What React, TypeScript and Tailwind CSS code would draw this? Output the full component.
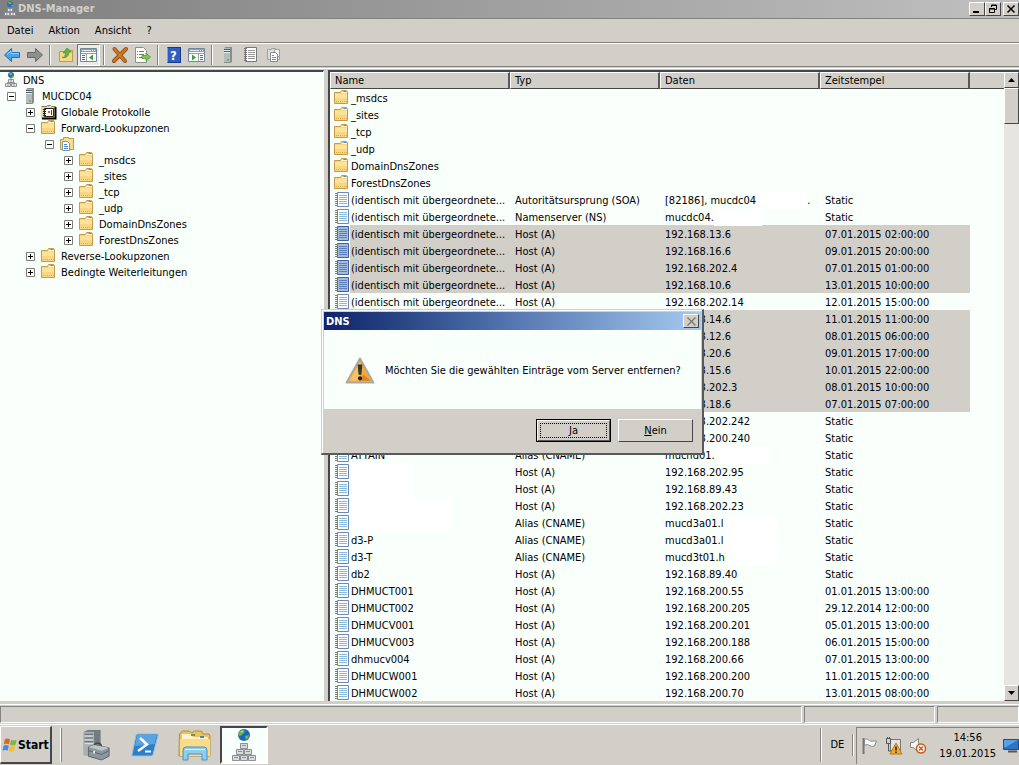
import { ReactNode } from "react";
import clsx from "clsx";

type Kind = "folder" | "record";

type RecordRow = {
  kind: Kind;
  name: string;
  type?: string;
  data?: string;
  tail?: string;
  stamp?: string;
  selected?: boolean;
  nameMask?: string;
  dataMask?: string;
};

const SAME = "(identisch mit übergeordnete...";

const host = (name: string, data: string, stamp: string, selected = false): RecordRow => ({
  kind: "record",
  name,
  type: "Host (A)",
  data,
  stamp,
  selected,
});

const alias = (name: string, data: string): RecordRow => ({
  kind: "record",
  name,
  type: "Alias (CNAME)",
  data,
  stamp: "Static",
  dataMask: "w-[54px]",
});

const rows: RecordRow[] = [
  { kind: "folder", name: "_msdcs" },
  { kind: "folder", name: "_sites" },
  { kind: "folder", name: "_tcp" },
  { kind: "folder", name: "_udp" },
  { kind: "folder", name: "DomainDnsZones" },
  { kind: "folder", name: "ForestDnsZones" },
  {
    kind: "record",
    name: SAME,
    type: "Autoritätsursprung (SOA)",
    data: "[82186], mucdc04",
    dataMask: "w-[51px]",
    tail: ".",
    stamp: "Static",
  },
  {
    kind: "record",
    name: SAME,
    type: "Namenserver (NS)",
    data: "mucdc04.",
    dataMask: "w-[48px]",
    stamp: "Static",
  },
  host(SAME, "192.168.13.6", "07.01.2015 02:00:00", true),
  host(SAME, "192.168.16.6", "09.01.2015 20:00:00", true),
  host(SAME, "192.168.202.4", "07.01.2015 01:00:00", true),
  host(SAME, "192.168.10.6", "13.01.2015 10:00:00", true),
  host(SAME, "192.168.202.14", "12.01.2015 15:00:00"),
  host(SAME, "192.168.14.6", "11.01.2015 11:00:00", true),
  host(SAME, "192.168.12.6", "08.01.2015 06:00:00", true),
  host(SAME, "192.168.20.6", "09.01.2015 17:00:00", true),
  host(SAME, "192.168.15.6", "10.01.2015 22:00:00", true),
  host(SAME, "192.168.202.3", "08.01.2015 10:00:00", true),
  host(SAME, "192.168.18.6", "07.01.2015 07:00:00", true),
  host(SAME, "192.168.202.242", "Static"),
  host(SAME, "192.168.200.240", "Static"),
  alias("ATTAIN", "mucnd01."),
  { ...host("", "192.168.202.95", "Static"), nameMask: "w-[62px]" },
  { ...host("", "192.168.89.43", "Static"), nameMask: "w-[62px]" },
  { ...host("", "192.168.202.23", "Static"), nameMask: "w-[101px]" },
  { ...alias("", "mucd3a01.l"), nameMask: "w-[101px]" },
  alias("d3-P", "mucd3a01.l"),
  alias("d3-T", "mucd3t01.h"),
  host("db2", "192.168.89.40", "Static"),
  host("DHMUCT001", "192.168.200.55", "01.01.2015 13:00:00"),
  host("DHMUCT002", "192.168.200.205", "29.12.2014 12:00:00"),
  host("DHMUCV001", "192.168.200.201", "05.01.2015 13:00:00"),
  host("DHMUCV003", "192.168.200.188", "06.01.2015 15:00:00"),
  host("dhmucv004", "192.168.200.66", "07.01.2015 13:00:00"),
  host("DHMUCW001", "192.168.200.200", "11.01.2015 12:00:00"),
  host("DHMUCW002", "192.168.200.70", "13.01.2015 08:00:00"),
];

/* ---------- icons ---------- */

function FolderIcon() {
  return (
    <svg width="16" height="16" viewBox="0 0 16 16" className="shrink-0">
      <path d="M.5 2.500h6l1-2h5l1 1v12H.5z" fill="#f9d782" stroke="#c49c48" />
      <path d="M1 4h12v4H1z" fill="#fbe39c" />
      <path d="M7.500 2.500h5.500" stroke="#fff6d2" />
      <path d="M9.500 1.500h3" stroke="#4a90d8" />
      <path d="M2 11.500h11" stroke="#e0ab48" strokeDasharray="1 1" />
    </svg>
  );
}

function RecordIcon({ selected = false }: { selected?: boolean }) {
  return (
    <svg width="16" height="16" viewBox="0 0 16 16" className="shrink-0">
      <path d="M3.500.5h11v14h-11z" fill={selected ? "#a5bbdc" : "#fff"} stroke={selected ? "#3f60a2" : "#6c87bb"} />
      <path d="M5 3.500h8M5 5.500h8M5 7.500h8M5 9.500h8M5 11.500h8" stroke={selected ? "#5b82bd" : "#86b9dc"} />
      <path d="M1 1.500h3M1 3.500h3M1 5.500h3M1 7.500h3M1 9.500h3M1 11.500h3M1 13.500h3" stroke="#76806f" />
    </svg>
  );
}

function DnsIcon() {
  return (
    <svg width="16" height="16" viewBox="0 0 16 16" className="shrink-0">
      <circle cx="8" cy="3" r="3" fill="#2872bd" />
      <path d="M6 1h3v2H7zM9 4h2v1H9z" fill="#6bbb4b" />
      <path d="M8 6v2M5 10v2M11 10v2" stroke="#777" />
      <path d="M5.500 7.500h5v3h-5zM2.500 11.500h5v3h-5zM8.500 11.500h5v3h-5z" fill="#e9edf0" stroke="#8a8f96" />
      <path d="M7 9h2M4 13h2M10 13h2" stroke="#8a8f96" />
    </svg>
  );
}

function ServerIcon() {
  return (
    <svg width="16" height="16" viewBox="0 0 16 16" className="shrink-0">
      <path d="M4 1l2-1h6v15l-2 1H4z" fill="#878d90" />
      <path d="M4 1h6v14H4z" fill="#b4bcbf" />
      <path d="M4 2.500h6M4 4.500h6" stroke="#50595f" />
      <path d="M4 3.500h6M4 5.500h6" stroke="#e7eef0" />
      <path d="M7 12h2v2H7z" fill="#77b255" />
    </svg>
  );
}

function LogBookIcon() {
  return (
    <svg width="16" height="16" viewBox="0 0 16 16" className="shrink-0">
      <path d="M0 2h5l1-1h3v2h5v12H0z" fill="#e9d6a0" />
      <path d="M.5 2.500h5l1-1h3l1 1h4" fill="none" stroke="#8c7848" />
      <path d="M14.500 3v11.500H1" fill="none" stroke="#000" strokeWidth="2" />
      <path d="M3.500 4.500h9v8h-9z" fill="#fff" stroke="#222" />
      <path d="M2 5.500h3M2 7.500h3M2 9.500h3M2 11.500h3" stroke="#222" />
      <path d="M7 7h2v2H7z" fill="#d8682b" />
      <path d="M10.500 6v5" stroke="#444" />
    </svg>
  );
}

function ZoneIcon() {
  return (
    <svg width="16" height="16" viewBox="0 0 16 16" className="shrink-0">
      <path d="M.5 3.500h3v-2h5v1h5v11H.5z" fill="#f8dc8f" stroke="#c09a48" />
      <path d="M2.500 5.500h5l2 2v7h-7z" fill="#fff" stroke="#7d95ab" />
      <path d="M4 8.500h3M4 10.500h4M4 12.500h4" stroke="#4b86c6" />
    </svg>
  );
}

function ArrowIcon({ forward = false }: { forward?: boolean }) {
  return (
    <svg width="18" height="18" viewBox="0 0 18 18">
      {forward ? (
        <path d="M1.500 6.500h8v-4l7 6.500-7 6.500v-4h-8z" fill="#8f8f8d" stroke="#666664" />
      ) : (
        <>
          <path d="M16.500 6.500h-8v-4l-7 6.500 7 6.500v-4h8z" fill="#48a4e8" stroke="#1c6fc0" />
          <path d="M4 8.500l4-3.500v2.500h8" fill="none" stroke="#9ad6fa" />
        </>
      )}
    </svg>
  );
}

function UpFolderIcon() {
  return (
    <svg width="16" height="16" viewBox="0 0 16 16">
      <path d="M1.500 4.500h7l1-1h5v11h-13z" fill="#f8d983" stroke="#c09a48" />
      <path d="M4 10.500c2 0 3.500-2 3.500-4.500H5l4-5 4.500 4H11c0 4-3 6.500-7 5.500z" fill="#62b544" stroke="#3d8a2a" strokeWidth=".6" />
    </svg>
  );
}

function PaneIcon({ right = false }: { right?: boolean }) {
  return (
    <svg width="17" height="16" viewBox="0 0 17 16">
      <path d="M.5 1.500h16v13H.5z" fill="#fff" stroke="#73879c" />
      <path d="M1 2h15v3H1z" fill="#8fa0b4" />
      <path d="M2 3.500h9" stroke="#dce6f0" />
      <path d="M12 3.500h1M14 3.500h1" stroke="#fff" />
      <path d={right ? "M1 6.500h15M10.500 7v7" : "M1 6.500h15M6.500 7v7"} stroke="#8fa0b4" />
      {right ? (
        <>
          <path d="M4 7.500l4 3-4 3z" fill="#3f9e3b" />
          <path d="M12 8.500h3M12 10.500h3M12 12.500h3" stroke="#2f77c4" />
        </>
      ) : (
        <>
          <path d="M13 7.500l-4 3 4 3z" fill="#3f9e3b" />
          <path d="M2 8.500h3M2 10.500h3M2 12.500h3" stroke="#2f77c4" />
        </>
      )}
    </svg>
  );
}

function DeleteIcon() {
  return (
    <svg width="18" height="18" viewBox="0 0 18 18">
      <path d="M3.500 3L14 15M15 3L3 15" stroke="#8c4a0e" strokeWidth="4" strokeLinecap="round" />
      <path d="M3.500 3L14 15M15 3L3 15" stroke="#cf7a20" strokeWidth="2.400" strokeLinecap="round" />
    </svg>
  );
}

function ExportIcon() {
  return (
    <svg width="17" height="16" viewBox="0 0 17 16">
      <path d="M1.500.5h8l3 3v12h-11z" fill="#fffef2" stroke="#8d9289" />
      <path d="M3 4.500h1M3 7.500h1M3 10.500h1M5 4.500h5M5 7.500h5M5 10.500h3" stroke="#6d7a80" />
      <path d="M8 8.500h4v-2.500l4.500 4-4.500 4v-2.500H8z" fill="#7cc653" stroke="#4c9434" strokeWidth=".7" />
    </svg>
  );
}

function HelpIcon() {
  return (
    <span className="flex h-4 w-[14px] items-center justify-center border border-[#163a8c] border-l-[#7ba4e6] bg-[#2c5fc4] text-[13px] leading-none font-bold text-white">
      ?
    </span>
  );
}

function NotebookIcon() {
  return (
    <svg width="16" height="16" viewBox="0 0 16 16">
      <path d="M2.500.5h11v14h-11z" fill="#fff" stroke="#777" />
      <path d="M5 3.500h7M5 5.500h7M5 7.500h7M5 9.500h7M5 11.500h7" stroke="#999" />
      <path d="M1 1.500h3M1 3.500h3M1 5.500h3M1 7.500h3M1 9.500h3M1 11.500h3M1 13.500h3" stroke="#777" />
    </svg>
  );
}

function CopiesIcon() {
  return (
    <svg width="16" height="16" viewBox="0 0 16 16">
      <path d="M1.500 2.500h4v-1h4v1h4v10h-12z" fill="#dededa" stroke="#a0a09c" />
      <path d="M8.500 2.500h5v7h-5z" fill="#f4f4f0" stroke="#a0a09c" />
      <path d="M4.500 5.500h5l2 2v7h-7z" fill="#fff" stroke="#888" />
      <path d="M6 8.500h2M6 10.500h4M6 12.500h4" stroke="#888" />
    </svg>
  );
}

function WarningIcon() {
  return (
    <svg width="30" height="28" viewBox="0 0 32 30" className="shrink-0">
      <path d="M16 1.500L30.500 27.500h-29z" fill="#f4a93c" stroke="#a7a7a4" strokeWidth="2" strokeLinejoin="round" />
      <path d="M16 5L4.500 25.500h11.500z" fill="#fac063" />
      <path d="M20 19l7.500 6.500H14z" fill="#d98521" />
      <path d="M13.500 8h5l-1 11h-3z" fill="#2c3a30" />
      <circle cx="16" cy="22.800" r="2.200" fill="#1b1b1b" />
    </svg>
  );
}

function WindowsLogo() {
  return (
    <svg width="16" height="16" viewBox="0 0 17 16" className="shrink-0">
      <path d="M3 2c2-1.500 4-1 5.500 0L7.500 7.500C6 6.500 4 6.500 2 7.500z" fill="#e2632d" />
      <path d="M9.500 2.500c2 1 4 1 6 0l-1.200 5.500c-2 1-4 .8-5.800-.2z" fill="#7fb83f" />
      <path d="M1.700 8.700c2-1 4-.9 5.500 0L6 14c-1.500-1-3.500-1-5.500 0z" fill="#4a8ad6" />
      <path d="M8.200 9c2 1 4 1 5.800.2l-1.200 5.300c-2 1-4 .8-5.800-.2z" fill="#f4bd35" />
    </svg>
  );
}

function ServerManagerIcon() {
  return (
    <svg width="30" height="32" viewBox="0 0 32 32">
      <path d="M4 2l4-2h14v24l-4 3H4z" fill="#737b80" />
      <path d="M4 2h11v25H4z" fill="#a9b1b5" />
      <path d="M5 4.500h9M5 8.500h9M5 12.500h9" stroke="#565f65" />
      <path d="M5 6.500h9M5 10.500h9M5 14.500h9" stroke="#e0e6e8" />
      <path d="M15 17c0-4 8-4 8 1" fill="none" stroke="#3f474c" strokeWidth="1.500" />
      <path d="M9 18l6-2 16 3v9l-8 4-14-4z" fill="#8b969d" stroke="#59636a" />
      <path d="M9 18l6-2 16 3-8 3z" fill="#bcc5ca" />
      <path d="M9 22l14 4 8-4" fill="none" stroke="#59636a" />
      <path d="M14 22h2v3h-2z" fill="#e4e8ea" />
    </svg>
  );
}

function PowerShellIcon() {
  return (
    <svg width="28" height="24" viewBox="0 0 28 24">
      <path d="M6 1h20q1.500 0 1 1.500l-5 19q-.4 1.500-2 1.500H2q-1.500 0-1-1.500l4-19Q5.400 1 6 1z" fill="#2e7fc8" stroke="#8fc2ea" />
      <path d="M6 2h20l-2.500 9L4 13z" fill="#5ba3df" />
      <path d="M9 5l7 6.500L7 18" fill="none" stroke="#fff" strokeWidth="2.500" />
      <path d="M14 18.500h6" stroke="#fff" strokeWidth="2" />
    </svg>
  );
}

function ExplorerIcon() {
  return (
    <svg width="34" height="32" viewBox="0 0 34 32">
      <path d="M1.500 5l3-3h7l2 2 3-2h7l1.500 3h6l1 2v20h-31z" fill="#eec15c" stroke="#b88b37" />
      <path d="M4 5h9l2 3h15v3H4z" fill="#fff3cf" />
      <path d="M13 5h4v2h-4z" fill="#5e9e3e" />
      <path d="M22 7h4v2h-4z" fill="#3d84cf" />
      <path d="M2 10h30v17H2z" fill="#f9dd86" />
      <path d="M5 31V21q0-3 3-3h18q3 0 3 3v10h-5v-6H10v6z" fill="#8fcdf0" stroke="#4690c4" />
      <path d="M7 20.500h20" stroke="#d9f2fd" />
    </svg>
  );
}

function DnsTaskIcon() {
  const boxes = [[12, 15], [8, 21], [16, 21], [4, 27], [12, 27], [20, 27]];
  return (
    <svg width="32" height="33" viewBox="0 0 32 33">
      <circle cx="16" cy="6" r="6" fill="#1e66b6" />
      <path d="M12 2q4-2 5 0l-2 3-3 2-2-1zM17 7l4-1q0 3-3 5z" fill="#6fb84c" />
      <path d="M13 3l2-1" stroke="#bfe4ff" />
      {boxes.map(([x, y]) => (
        <g key={`${x}-${y}`}>
          <path d={`M${x + 0.5} ${y - 0.5}h7v5h-7z`} fill="#d8dcde" stroke="#8a8f93" />
          <path d={`M${x + 2} ${y + 1.5}h4`} stroke="#8a8f93" />
        </g>
      ))}
    </svg>
  );
}

function FlagIcon() {
  return (
    <svg width="18" height="18" viewBox="0 0 18 18">
      <path d="M2.500 1v16" stroke="#777" strokeWidth="2" />
      <path d="M3.500 2.500c3-1.500 4 1 6 1.500s4-.5 6 0l-2 5c-3 1-4 0-6-1s-3 0-4 .5z" fill="#fafafa" stroke="#888" />
    </svg>
  );
}

function NetworkIcon() {
  return (
    <svg width="18" height="18" viewBox="0 0 18 18">
      <path d="M5.500 2.500h10v11h-10z" fill="#e4e3de" stroke="#777" />
      <path d="M1.500 1.500h4v5h-4zM2.500 0v2M4.500 0v2M3.500 6v8h3" fill="none" stroke="#555" />
      <path d="M11 6l6 11H5z" fill="#f6a829" stroke="#b87916" />
      <path d="M11 9.500v4M11 14.500v1.500" stroke="#222" strokeWidth="1.500" />
    </svg>
  );
}

function VolumeIcon() {
  return (
    <svg width="18" height="18" viewBox="0 0 18 18">
      <path d="M1.500 5.500h3l5-4v14l-5-5h-3z" fill="#f5f5f5" stroke="#888" />
      <circle cx="12" cy="11.500" r="4.500" fill="#fff" stroke="#c85a1c" strokeWidth="1.500" />
      <path d="M10 9.500l4 4M14 9.500l-4 4" stroke="#c85a1c" strokeWidth="1.500" />
    </svg>
  );
}

function DesktopIcon() {
  return (
    <svg width="16" height="14" viewBox="0 0 16 14">
      <path d="M.5.5h15v10H.5z" fill="#2c74c4" stroke="#1c4b86" />
      <path d="M1 1h14L3 8H1z" fill="#5aa0e4" />
      <path d="M5 12.500h9" stroke="#555" strokeWidth="2" />
    </svg>
  );
}

/* ---------- small parts ---------- */

const RAISED = "border border-t-white border-l-white border-r-[#45454a] border-b-[#45454a] bg-[#d1cfc8]";

function Separator() {
  return <div className="mx-[3px] h-5 w-[2px] border-l border-l-[#85837e] border-r border-r-white" />;
}

function ToolButton({ label, pressed, children }: { label: string; pressed?: boolean; children: ReactNode }) {
  return (
    <button
      type="button"
      aria-label={label}
      className={clsx(
        "flex h-[22px] w-[23px] items-center justify-center border",
        pressed ? "border-t-[#77756f] border-l-[#77756f] border-r-white border-b-white bg-[#ecebe6]" : "border-transparent",
      )}
    >
      {children}
    </button>
  );
}

function CaptionButton({ label, children }: { label: string; children: ReactNode }) {
  return (
    <button type="button" aria-label={label} className={clsx("flex h-[14px] w-4 items-center justify-center", RAISED)}>
      <svg width="12" height="10" viewBox="0 0 12 10" fill="none" stroke="#000">
        {children}
      </svg>
    </button>
  );
}

function Expander({ open }: { open: boolean }) {
  return (
    <button type="button" aria-label={open ? "Reduzieren" : "Erweitern"} className="shrink-0">
      <svg width="9" height="9" viewBox="0 0 9 9">
        <path d="M.5.5h8v8h-8z" fill="#fff" stroke="#7c7c7c" />
        <path d={open ? "M2 4.500h5" : "M2 4.500h5M4.500 2v5"} stroke="#000" />
      </svg>
    </button>
  );
}

type TreeItem = { indent: string; open?: boolean; icon: ReactNode; label: string };

const tree: TreeItem[] = [
  { indent: "pl-[3px]", icon: <DnsIcon />, label: "DNS" },
  { indent: "pl-[7px]", open: true, icon: <ServerIcon />, label: "MUCDC04" },
  { indent: "pl-[26px]", open: false, icon: <LogBookIcon />, label: "Globale Protokolle" },
  { indent: "pl-[26px]", open: true, icon: <FolderIcon />, label: "Forward-Lookupzonen" },
  { indent: "pl-[45px]", open: true, icon: <ZoneIcon />, label: "" },
  { indent: "pl-16", open: false, icon: <FolderIcon />, label: "_msdcs" },
  { indent: "pl-16", open: false, icon: <FolderIcon />, label: "_sites" },
  { indent: "pl-16", open: false, icon: <FolderIcon />, label: "_tcp" },
  { indent: "pl-16", open: false, icon: <FolderIcon />, label: "_udp" },
  { indent: "pl-16", open: false, icon: <FolderIcon />, label: "DomainDnsZones" },
  { indent: "pl-16", open: false, icon: <FolderIcon />, label: "ForestDnsZones" },
  { indent: "pl-[26px]", open: false, icon: <FolderIcon />, label: "Reverse-Lookupzonen" },
  { indent: "pl-[26px]", open: false, icon: <FolderIcon />, label: "Bedingte Weiterleitungen" },
];

function ConsoleTree() {
  return (
    <nav className="w-[324px] shrink-0 border-t-2 border-t-[#45454a] border-r border-r-white bg-[#f9fffa]" aria-label="Konsolenstruktur">
      <ul>
        {tree.map((item, i) => (
          <li key={i} className={clsx("flex h-4 items-center", item.indent)}>
            {item.open !== undefined && (
              <span className="mr-[6px] flex">
                <Expander open={item.open} />
              </span>
            )}
            {item.icon}
            {item.label ? (
              <span className="ml-1 pt-[2px] whitespace-nowrap">{item.label}</span>
            ) : (
              <span className="ml-1 h-4 w-[62px] bg-white" />
            )}
          </li>
        ))}
      </ul>
    </nav>
  );
}

function RecordTable() {
  const head =
    "h-[17px] border-t border-l border-t-white border-l-white border-r-2 border-r-[#5a595a] border-b border-b-[#45454a] bg-[#d1cfc8] p-0 pl-1 text-left font-normal";
  return (
    <table className="min-w-0 flex-1 table-fixed border-separate border-spacing-0 bg-[#f9fffa]">
      <colgroup>
        <col className="w-[180px]" />
        <col className="w-[150px]" />
        <col className="w-[160px]" />
        <col className="w-[150px]" />
        <col />
      </colgroup>
      <thead>
        <tr>
          <th className={head}>Name</th>
          <th className={head}>Typ</th>
          <th className={head}>Daten</th>
          <th className={head}>Zeitstempel</th>
          <th className="border-t border-b border-t-white border-b-[#45454a] bg-[#d1cfc8] p-0" />
        </tr>
      </thead>
      <tbody>
        {rows.map((row, i) => {
          const cell = clsx("h-[17px] p-0 pt-[2px] pl-[5px]", row.selected && "bg-[#d1cfc8]");
          return (
            <tr key={i}>
              <td className="h-[17px] p-0 pl-1">
                <div className="flex h-[17px] items-center">
                  {row.kind === "folder" ? <FolderIcon /> : <RecordIcon selected={row.selected} />}
                  <span
                    className={clsx(
                      "flex h-[17px] flex-1 items-center pl-px whitespace-nowrap",
                      !row.nameMask && "pt-[2px]",
                      row.selected && "bg-[#d1cfc8]",
                    )}
                  >
                    {row.name}
                    {row.nameMask && <span className={clsx("h-[17px] bg-white", row.nameMask)} />}
                  </span>
                </div>
              </td>
              <td className={cell}>{row.type}</td>
              <td className={cell}>
                <div className="flex h-[15px] items-center whitespace-nowrap">
                  {row.data}
                  {row.dataMask && <span className={clsx("h-[17px] bg-white", row.dataMask)} />}
                  {row.tail}
                </div>
              </td>
              <td className={cell}>{row.stamp}</td>
              <td />
            </tr>
          );
        })}
      </tbody>
    </table>
  );
}

function ScrollBar() {
  const button = clsx("flex h-4 w-full shrink-0 items-center justify-center", RAISED);
  return (
    <div className="flex w-[15px] shrink-0 flex-col bg-[#e6e5df]">
      <button type="button" aria-label="Nach oben" className={button}>
        <svg width="7" height="4" viewBox="0 0 7 4">
          <path d="M3.500 0L7 4H0z" />
        </svg>
      </button>
      <div className={clsx("h-9 shrink-0", RAISED)} />
      <div className="flex-1" />
      <button type="button" aria-label="Nach unten" className={button}>
        <svg width="7" height="4" viewBox="0 0 7 4">
          <path d="M0 0h7L3.500 4z" />
        </svg>
      </button>
    </div>
  );
}

function ConfirmDialog() {
  return (
    <div
      role="dialog"
      aria-label="DNS"
      className="absolute top-[309px] left-[321px] w-[383px] border border-t-[#d1cfc8] border-l-[#d1cfc8] border-r-2 border-b-2 border-r-[#5a595a] border-b-[#5a595a] bg-[#d1cfc8]"
    >
      <div className="border-t border-l border-white p-px">
        <div className="flex h-[18px] items-center justify-between bg-linear-to-r from-[#0f246a] via-[#5576b0] to-[#a6caf0] pr-[2px] pl-[2px] text-white">
          <span className="pt-px font-bold">DNS</span>
          <button type="button" aria-label="Schließen" className={clsx("flex h-[14px] w-4 items-center justify-center", RAISED)}>
            <svg width="9" height="9" viewBox="0 0 9 9" stroke="#77756f" strokeWidth="1.200">
              <path d="M.5.5l8 8M8.500.5l-8 8" />
            </svg>
          </button>
        </div>
        <div className="flex h-[79px] items-center bg-[#f9fffa] pt-[2px] pl-[21px]">
          <WarningIcon />
          <p className="ml-[10px] whitespace-nowrap">Möchten Sie die gewählten Einträge vom Server entfernen?</p>
        </div>
        <div className="flex h-[43px] items-center justify-end gap-[7px] pr-2">
          <button type="button" className="h-[23px] w-[75px] border border-black p-0">
            <span className="flex h-full items-center justify-center border border-t-white border-l-white border-r-[#5a595a] border-b-[#5a595a] p-[2px]">
              <span className="flex h-full w-full items-center justify-center border border-dotted border-black">
                <span>
                  <u>J</u>a
                </span>
              </span>
            </span>
          </button>
          <button type="button" className={clsx("h-[23px] w-[75px]", RAISED)}>
            <u>N</u>ein
          </button>
        </div>
      </div>
    </div>
  );
}

function Taskbar() {
  return (
    <footer className="flex h-[41px] items-center border-t border-t-white">
      <button type="button" className={clsx("flex h-[38px] w-[52px] shrink-0 items-center border-r-2 border-b-2 pl-px text-[12px] font-bold", RAISED)}>
        <WindowsLogo />
        Start
      </button>
      <div className="ml-2 h-[34px] w-[2px] border-l border-l-white border-r border-r-[#85837e]" />
      <div className="ml-2 flex items-center">
        <button type="button" aria-label="Server-Manager" className="flex h-[38px] w-[50px] items-center justify-center">
          <ServerManagerIcon />
        </button>
        <button type="button" aria-label="Windows PowerShell" className="flex h-[38px] w-[50px] items-center justify-center">
          <PowerShellIcon />
        </button>
        <button type="button" aria-label="Windows-Explorer" className="flex h-[38px] w-[50px] items-center justify-center">
          <ExplorerIcon />
        </button>
        <button
          type="button"
          aria-label="DNS-Manager"
          className="flex h-[38px] w-12 items-center justify-center border-2 border-t-[#45454a] border-l-[#45454a] border-r-white border-b-white bg-[#f9fffa]"
        >
          <DnsTaskIcon />
        </button>
      </div>
      <div className="ml-auto h-[34px] w-[2px] border-l border-l-[#85837e] border-r border-r-white" />
      <span className="mx-2">DE</span>
      <div className="h-[22px] w-[2px] border-l border-l-[#85837e] border-r border-r-white" />
      <div className="ml-[2px] flex h-[37px] items-center border-t border-l border-[#85837e] pl-1">
        <div className="flex items-center gap-[6px]">
          <FlagIcon />
          <NetworkIcon />
          <VolumeIcon />
        </div>
        <div className="ml-3 pt-px text-center leading-4">
          <div>14:56</div>
          <div>19.01.2015</div>
        </div>
        <span className="ml-[7px]">
          <DesktopIcon />
        </span>
      </div>
    </footer>
  );
}

export default function App() {
  const cell = "border border-t-[#85837e] border-l-[#85837e] border-r-white border-b-white";
  return (
    <div className="relative flex min-h-screen flex-col overflow-hidden bg-[#d1cfc8] font-['DejaVu_Sans_Condensed','DejaVu_Sans',sans-serif] text-[11px] leading-[14px] text-black [font-stretch:condensed]">
      {/* Title bar */}
      <header className="flex h-[18px] items-center bg-linear-to-r from-[#808080] to-[#c0c0c0] pl-[2px]">
        <DnsIcon />
        <h1 className="flex-1 text-[11px] font-bold text-[#d1cfc8]">DNS-Manager</h1>
        <CaptionButton label="Minimieren">
          <path d="M2 8h6" strokeWidth="2" />
        </CaptionButton>
        <CaptionButton label="Wiederherstellen">
          <path d="M4.500 3V1h5v4.500H8M4 1.500h6M2.500 4.500h5v4h-5zM2 5h6" />
        </CaptionButton>
        <span className="ml-[2px]">
          <CaptionButton label="Schließen">
            <path d="M2.500 1.500l7 7M9.500 1.500l-7 7" strokeWidth="1.500" />
          </CaptionButton>
        </span>
      </header>

      {/* Menu */}
      <nav className="flex h-[25px] items-center gap-[15px] border-t border-b border-t-[#85837e] border-b-[#85837e] pt-px pl-[7px]">
        <button type="button">Datei</button>
        <button type="button">Aktion</button>
        <button type="button">Ansicht</button>
        <button type="button">?</button>
      </nav>

      {/* Toolbar */}
      <div className="flex h-6 items-center border-t border-b border-t-white border-b-[#85837e]">
        <ToolButton label="Zurück">
          <ArrowIcon />
        </ToolButton>
        <ToolButton label="Vorwärts">
          <ArrowIcon forward />
        </ToolButton>
        <Separator />
        <ToolButton label="Übergeordnet">
          <UpFolderIcon />
        </ToolButton>
        <ToolButton label="Konsolenstruktur" pressed>
          <PaneIcon />
        </ToolButton>
        <Separator />
        <ToolButton label="Löschen">
          <DeleteIcon />
        </ToolButton>
        <ToolButton label="Liste exportieren">
          <ExportIcon />
        </ToolButton>
        <Separator />
        <ToolButton label="Hilfe">
          <HelpIcon />
        </ToolButton>
        <ToolButton label="Aktionsbereich">
          <PaneIcon right />
        </ToolButton>
        <Separator />
        <ToolButton label="Neuer Server">
          <ServerIcon />
        </ToolButton>
        <ToolButton label="Neuer Eintrag">
          <NotebookIcon />
        </ToolButton>
        <ToolButton label="Neue Zone">
          <CopiesIcon />
        </ToolButton>
      </div>

      {/* Panes */}
      <main className="mt-px flex flex-1 border-t border-t-white pt-px">
        <ConsoleTree />
        <div className="ml-1 flex min-w-0 flex-1 border-t-2 border-l-2 border-t-[#45454a] border-l-[#45454a]">
          <RecordTable />
          <ScrollBar />
        </div>
      </main>

      {/* Status bar */}
      <div className="mt-[3px] flex h-5 gap-[2px] border-t border-t-white pt-px pb-px">
        <div className={clsx("flex-1", cell)} />
        <div className={clsx("w-[131px]", cell)} />
        <div className={clsx("w-[82px]", cell)} />
      </div>

      <Taskbar />
      <ConfirmDialog />
    </div>
  );
}
